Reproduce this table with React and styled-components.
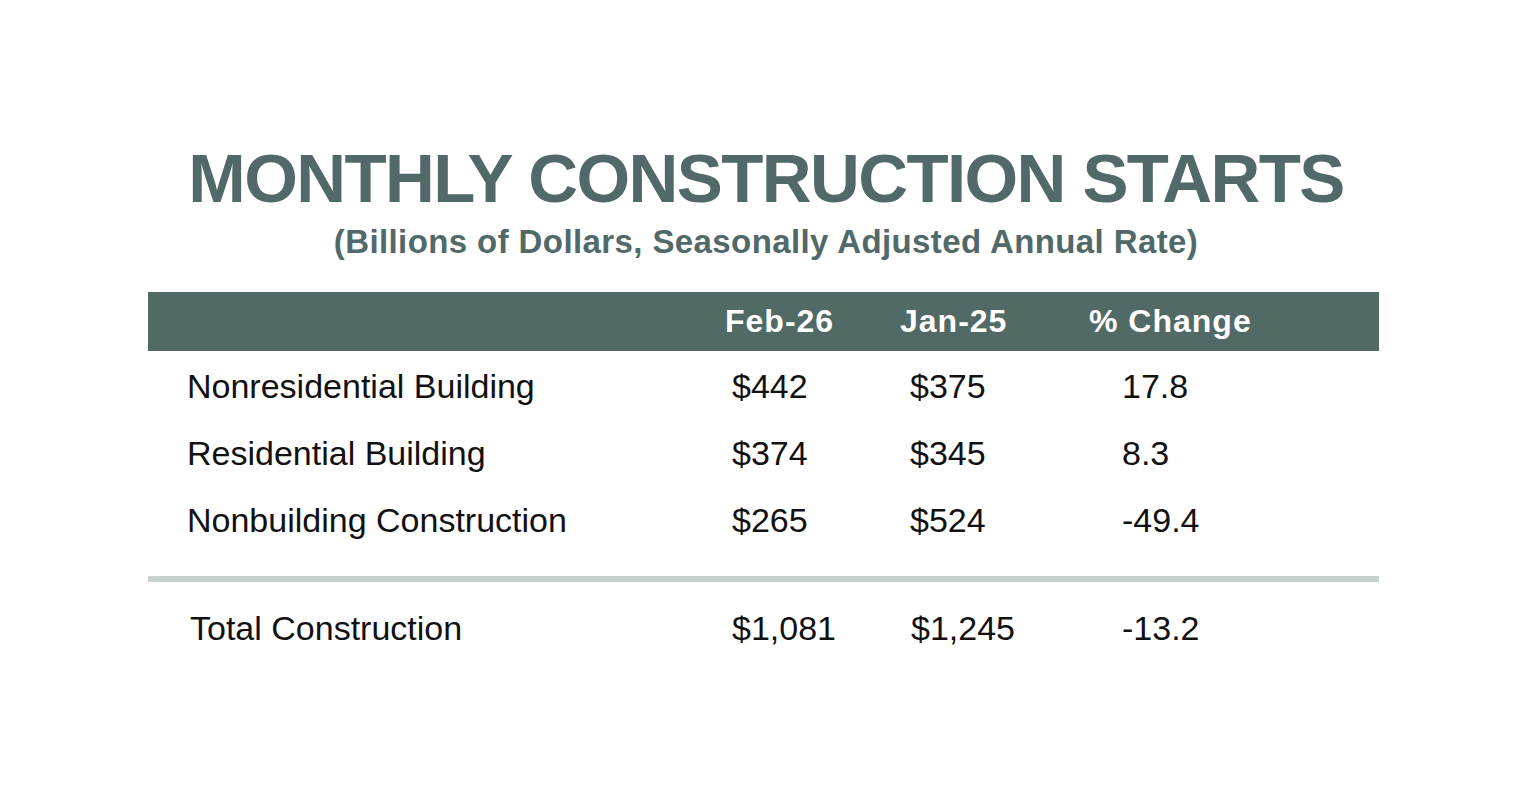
import styled, { createGlobalStyle } from 'styled-components';

const GlobalStyle = createGlobalStyle`
  html, body {
    margin: 0;
    padding: 0;
    background: #ffffff;
  }
  body {
    font-family: 'Liberation Sans', Arial, sans-serif;
    color: #111111;
  }
`;

const rows = [
  { label: 'Nonresidential Building', feb: '$442', jan: '$375', change: '17.8' },
  { label: 'Residential Building', feb: '$374', jan: '$345', change: '8.3' },
  { label: 'Nonbuilding Construction', feb: '$265', jan: '$524', change: '-49.4' },
];

const total = { label: 'Total Construction', feb: '$1,081', jan: '$1,245', change: '-13.2' };

const App = () => {
  return (
    <>
      <GlobalStyle />
      <Board>
        <Heading>
          <Title>MONTHLY CONSTRUCTION STARTS</Title>
          <Subtitle>(Billions of Dollars, Seasonally Adjusted Annual Rate)</Subtitle>
        </Heading>
        <HeaderBar>
          <HeadCell />
          <HeadCell>Feb-26</HeadCell>
          <HeadCell>Jan-25</HeadCell>
          <HeadCell>% Change</HeadCell>
        </HeaderBar>
        <Body>
          {rows.map((row) => (
            <Row key={row.label}>
              <Cell $indent={39}>{row.label}</Cell>
              <Cell $indent={9}>{row.feb}</Cell>
              <Cell $indent={12}>{row.jan}</Cell>
              <Cell $indent={35}>{row.change}</Cell>
            </Row>
          ))}
        </Body>
        <Divider />
        <Row $total>
          <Cell $indent={42}>{total.label}</Cell>
          <Cell $indent={9}>{total.feb}</Cell>
          <Cell $indent={13}>{total.jan}</Cell>
          <Cell $indent={35}>{total.change}</Cell>
        </Row>
      </Board>
    </>
  );
};

const Board = styled.main`
  width: 1231px;
  margin-left: 148px;
  padding-top: 139px;
`;

const Heading = styled.header`
  display: flex;
  flex-direction: column;
  align-items: center;
  padding-left: 5px;
  color: #52696a;
  font-weight: bold;
`;

const Title = styled.h1`
  margin: 0;
  font-size: 69px;
  line-height: 80px;
  letter-spacing: -1.6px;
  font-weight: bold;
  white-space: nowrap;
`;

const Subtitle = styled.p`
  margin: 3px 0 0;
  font-size: 33px;
  line-height: 40px;
  letter-spacing: 0.4px;
  white-space: nowrap;
`;

const columns = '575px 175px 189px 1fr';

const HeaderBar = styled.div`
  display: grid;
  grid-template-columns: ${columns};
  height: 59px;
  margin-top: 30px;
  background: #526a66;
  color: #ffffff;
  font-size: 32px;
  line-height: 59px;
  font-weight: bold;
  letter-spacing: 1px;
`;

const HeadCell = styled.div`
  padding-left: 2px;
  white-space: nowrap;
`;

const Body = styled.div`
  display: flex;
  flex-direction: column;
  padding-top: 2px;
`;

const Row = styled.div`
  display: grid;
  grid-template-columns: ${columns};
  height: 67px;
  margin-top: ${(p) => (p.$total ? '13px' : '0')};
  font-size: 34px;
  line-height: 67px;
  color: #111111;
`;

const Cell = styled.div`
  padding-left: ${(p) => p.$indent}px;
  white-space: nowrap;
`;

const Divider = styled.hr`
  margin: 22px 0 0;
  height: 6px;
  border: none;
  background: #c6d2cf;
`;

export default App;
